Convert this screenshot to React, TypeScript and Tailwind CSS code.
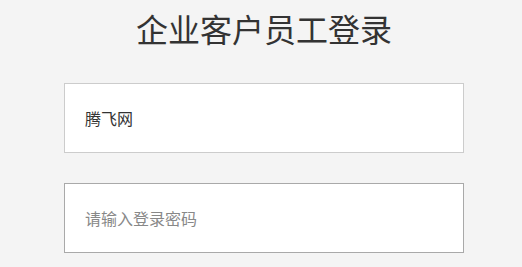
export default function App() {
  return (
    <div className="min-h-screen bg-[#f4f4f4] font-['Noto_Sans_CJK_SC',sans-serif]">
      <div className="ml-[64px] w-[400px] pt-[8px]">
        <h1 className="text-center text-[32px] leading-[40px] font-normal text-[#333]">
          企业客户员工登录
        </h1>
        <div className="mt-[35px] flex flex-col gap-[30px]">
          <input
            defaultValue="腾飞网"
            className="h-[70px] w-full border border-[#cccccc] bg-white px-[20px] text-[16px] text-[#333] outline-none"
          />
          <input
            type="password"
            placeholder="请输入登录密码"
            className="h-[70px] w-full border border-[#a9a9a9] bg-white px-[20px] text-[16px] text-[#333] outline-none placeholder:text-[#888]"
          />
        </div>
      </div>
    </div>
  );
}
